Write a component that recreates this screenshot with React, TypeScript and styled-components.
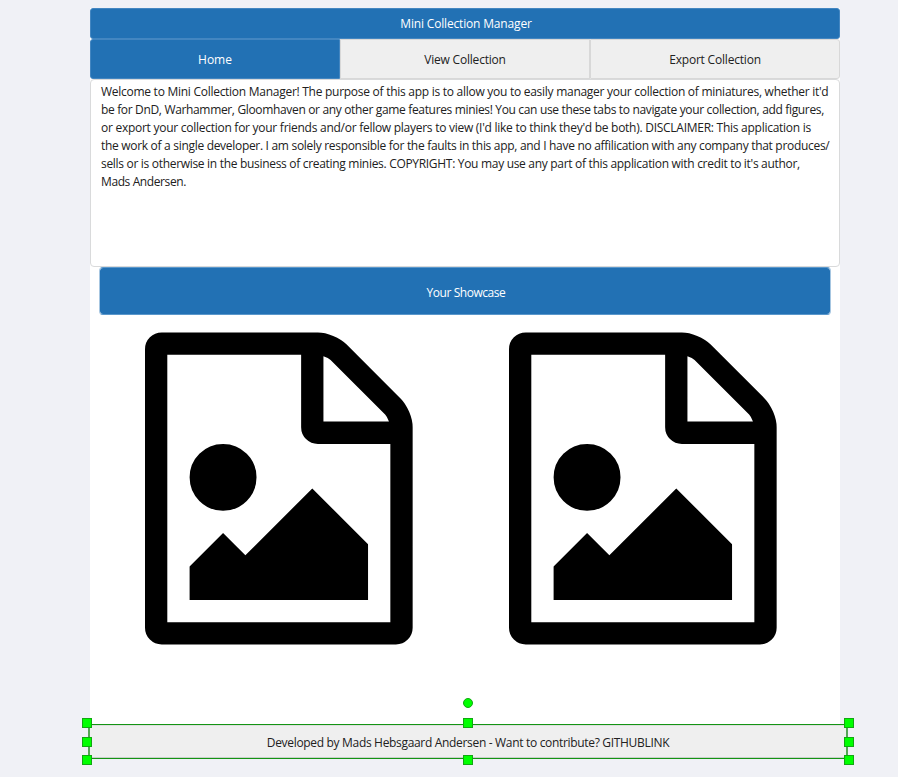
import React from "react";
import styled, { createGlobalStyle } from "styled-components";

const GlobalStyle = createGlobalStyle`
  * { box-sizing: border-box; }
  body {
    margin: 0;
    background: #f0f1f6;
    color: #212121;
    font-family: "Open Sans", "Noto Sans", sans-serif;
    font-size: 12px;
    overflow: hidden;
  }
`;

const Page = styled.div`
  height: 777px;
  padding: 8px 0 0 90px;
`;

const Sheet = styled.main`
  display: flex;
  flex-direction: column;
  width: 750px;
  height: 716px;
  background: #fff;
`;

const Label = styled.span<{ $spacing?: number }>`
  white-space: pre;
  letter-spacing: ${(p) => p.$spacing ?? 0}px;
`;

const TitleBar = styled.header`
  display: flex;
  align-items: center;
  justify-content: center;
  height: 31px;
  flex: none;
  padding-left: 2px;
  background: #2271b4;
  border: 1px solid #4386c1;
  border-radius: 3px;
  color: #fff;
`;

const Tabs = styled.nav`
  display: grid;
  grid-template-columns: repeat(3, 1fr);
  height: 40px;
  flex: none;
`;

const Tab = styled.button<{ $active?: boolean; $edge?: "left" | "right" }>`
  padding: 0;
  font: inherit;
  color: ${(p) => (p.$active ? "#fff" : "#212121")};
  background: ${(p) => (p.$active ? "#2271b4" : "#efefef")};
  border: 1px solid ${(p) => (p.$active ? "#4386c1" : "#d8d8d8")};
  border-radius: ${(p) =>
    p.$edge === "left" ? "3px 0 0 3px" : p.$edge === "right" ? "0 3px 3px 0" : "0"};
`;

const Intro = styled.section`
  display: flex;
  flex-direction: column;
  height: 188px;
  flex: none;
  padding: 3px 0 0 10px;
  line-height: 18px;
  border: 1px solid #d9dadb;
  border-radius: 4px;
`;

const ShowcaseBar = styled.h2`
  display: flex;
  align-items: center;
  justify-content: center;
  height: 48px;
  flex: none;
  margin: 0 9px;
  padding: 3px 0 0 2px;
  font: inherit;
  color: #fff;
  background: #2271b4;
  background-clip: padding-box;
  border: 1px solid #5a97cb;
  border-left-color: #a6c6e1;
  border-right-color: #a6c6e1;
  border-radius: 4px;
`;

const Gallery = styled.section`
  display: grid;
  grid-template-columns: 364px 364px;
  padding: 18px 0 0 55px;
`;

const Picture = styled.svg`
  display: block;
  width: 268px;
  height: 312px;
  overflow: visible;
`;

const Footer = styled.footer`
  position: relative;
  display: flex;
  align-items: center;
  justify-content: center;
  width: 760px;
  height: 35px;
  margin-left: -2px;
  padding-top: 1px;
  background: #efefef;
  border: solid #149414;
  border-width: 1px 2px;
  border-left-color: #55a555;
  border-right-color: #55a555;
  box-shadow: inset 0 1px #dcdfdc, inset 0 -1px #c9d0c9;
`;

const Handle = styled.i<{ $x: number; $y: number; $round?: boolean }>`
  position: absolute;
  left: ${(p) => p.$x}px;
  top: ${(p) => p.$y}px;
  width: 10px;
  height: 10px;
  background: #00ff00;
  border: 1px solid #12a812;
  border-radius: ${(p) => (p.$round ? "50%" : "0")};
`;

const introLines: [string, number][] = [
  ["Welcome to Mini Collection Manager! The purpose of this app is to allow you to easily manager your collection of miniatures, whether it'd", -0.27],
  ["be for DnD, Warhammer, Gloomhaven or any other game features minies! You can use these tabs to navigate your collection, add figures,", -0.34],
  ["or export your collection for your friends and/or fellow players to view (I'd like to think they'd be both). DISCLAIMER: This application is", -0.265],
  ["the work of a single developer. I am solely responsible for the faults in this app, and I have no affilication with any company that produces/", -0.303],
  ["sells or is otherwise in the business of creating minies. COPYRIGHT: You may use any part of this application with credit to it's author,", -0.307],
  ["Mads Andersen.", -0.4],
];

const handles: [number, number][] = [
  [-8, -7], [373, -7], [754, -7],
  [-8, 12], [754, 12],
  [-8, 30], [373, 30], [754, 30],
];

function FilePicture() {
  return (
    <Picture viewBox="0 3 1538 1792" preserveAspectRatio="none" aria-label="Miniature picture">
      <path d="M1468 380q28 28 48 76t20 88v1152q0 40-28 68t-68 28h-1344q-40 0-68-28t-28-68v-1600q0-40 28-68t68-28h896q40 0 88 20t76 48zm-444-244v376h376q-10-29-22-41l-313-313q-12-12-41-22zm384 1528v-1024h-416q-40 0-68-28t-28-68v-416h-768v1536h1280zm-128-448v320h-1024v-192l192-192 128 128 384-384zm-832-192q-80 0-136-56t-56-136 56-136 136-56 136 56 56 136-56 136-136 56z" />
    </Picture>
  );
}

export default function App() {
  return (
    <>
      <GlobalStyle />
      <Page>
        <Sheet>
          <TitleBar><Label $spacing={-0.17}>Mini Collection Manager</Label></TitleBar>
          <Tabs>
            <Tab $active $edge="left"><Label>Home</Label></Tab>
            <Tab><Label $spacing={-0.2}>View Collection</Label></Tab>
            <Tab $edge="right"><Label $spacing={-0.2}>Export Collection</Label></Tab>
          </Tabs>
          <Intro>
            {introLines.map(([text, spacing]) => (
              <Label key={text} $spacing={spacing}>{text}</Label>
            ))}
          </Intro>
          <ShowcaseBar><Label $spacing={-0.45}>Your Showcase</Label></ShowcaseBar>
          <Gallery>
            <FilePicture />
            <FilePicture />
          </Gallery>
        </Sheet>
        <Footer>
          <Label $spacing={-0.32}>Developed by Mads Hebsgaard Andersen - Want to contribute? GITHUBLINK</Label>
          <Handle $x={373} $y={-27.5} $round />
          {handles.map(([x, y]) => (
            <Handle key={`${x}:${y}`} $x={x} $y={y} />
          ))}
        </Footer>
      </Page>
    </>
  );
}
